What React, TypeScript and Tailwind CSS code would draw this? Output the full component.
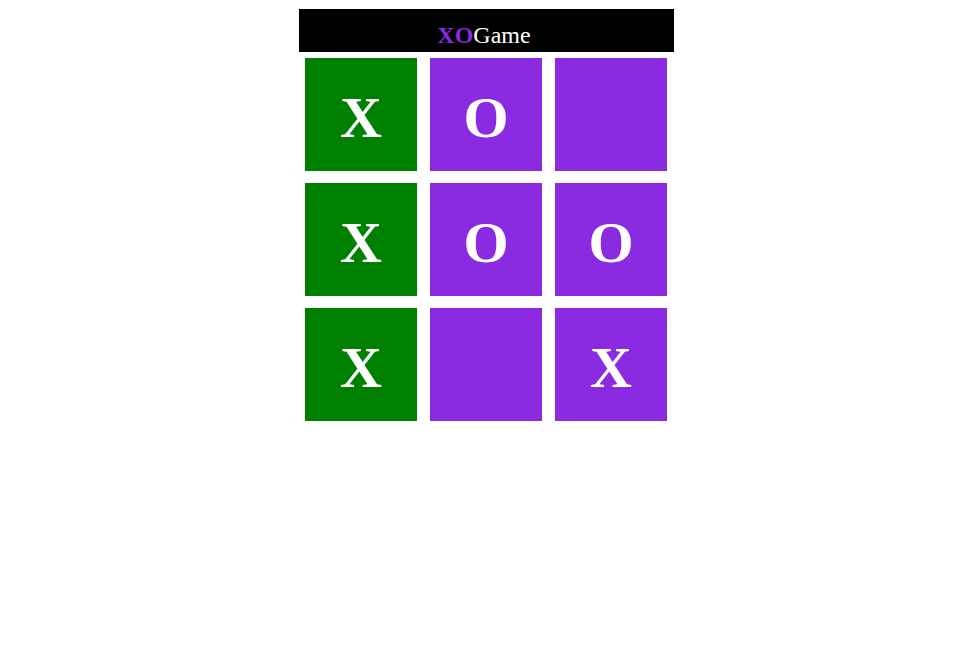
const board: string[] = ['X', 'O', '', 'X', 'O', 'O', 'X', '', 'X']
const winning = [0, 3, 6]

export default function App() {
  return (
    <div className="min-h-screen bg-white pl-[2px]" style={{ fontFamily: '"Liberation Serif", serif' }}>
      <div className="mx-auto w-[375px] pt-[9px]">
        <div className="h-[43px] bg-black pr-[5px] pt-[8px] text-center text-[24px] leading-normal">
          <span className="font-bold text-[#8a2be2]">XO</span>
          <span className="text-white">Game</span>
        </div>
        <div className="grid grid-cols-[112px_112px_112px] gap-x-[13px] gap-y-[12px] pl-[6px] pt-[6px]">
          {board.map((v, i) => (
            <div
              key={i}
              className={`flex h-[113px] items-center justify-center pt-[5px] text-[58px] font-bold text-white ${
                winning.includes(i) ? 'bg-[#008000]' : 'bg-[#8a2be2]'
              }`}
            >
              {v}
            </div>
          ))}
        </div>
      </div>
    </div>
  )
}
